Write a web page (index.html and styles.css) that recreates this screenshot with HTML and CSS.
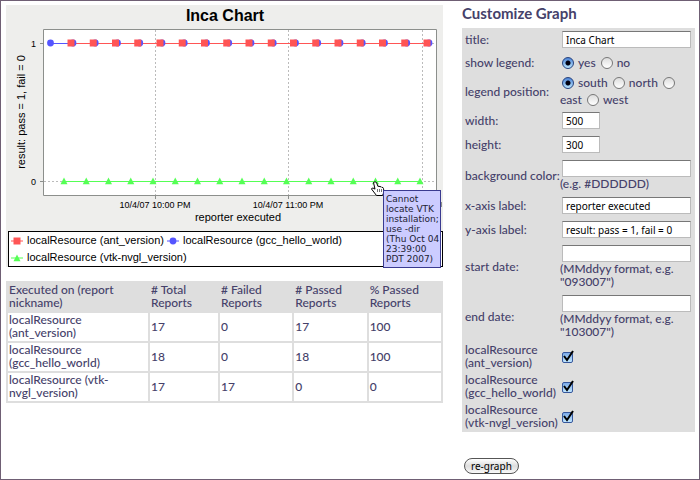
FILE: index.html
```html
<!DOCTYPE html>
<html lang="en">
<head>
<meta charset="utf-8">
<title>Inca Chart</title>
<link rel="stylesheet" href="styles.css">
</head>
<body>
<main class="page">
  <section class="report">
    <div class="chart">
      <svg class="plot" viewBox="6 5 437 225" role="img" aria-label="Inca Chart">
        <defs>
          <path id="red" d="M-3.500-3.500h7v7h-7z" fill="#ff5555"/>
          <circle id="blue" r="3.4" fill="#5555ff"/>
          <path id="green" d="M0-3.500 3.500 3.200h-7z" fill="#55ff55"/>
        </defs>
        <text class="heading" x="225" y="21" text-anchor="middle">Inca Chart</text>
        <path d="M43.500 29.500H436.500V195.500H43.500z" fill="#fff" stroke="#8c8f8c"/>
        <g class="grid"><path d="M155.500 30V195M288.500 30V195M422.500 30V195M428 43.500H436M44 181.500H64M420 181.500H436"/></g>
        <path d="M40 43.500h4M40 181.500h4M155.500 195v4M288.500 195v4M422.500 195v4M441.500 202v5" stroke="#8c8f8c"/>
        <g class="lines">
          <rect x="50" y="43" width="21" height="1" fill="#5555ff"/>
          <rect x="71" y="43" width="357" height="1" fill="#ff5555"/>
          <rect x="64" y="181" width="356" height="1" fill="#55ff55"/>
        </g>
        <g id="points"></g>
        <g class="ticks">
          <text x="36" y="47" text-anchor="end">1</text>
          <text x="36" y="185" text-anchor="end">0</text>
          <text x="155" y="208" text-anchor="middle">10/4/07 10:00 PM</text>
          <text x="288" y="208" text-anchor="middle">10/4/07 11:00 PM</text>
        </g>
        <text class="axis" x="238" y="221" text-anchor="middle">reporter executed</text>
        <text class="axis" transform="translate(25 112) rotate(-90)" text-anchor="middle">result: pass = 1, fail = 0</text>
        <path d="M373.500 182.500q1.500-1.500 3 0l1.500 4q1-1 2 .3q1.200-.7 1.800.6q1.500-.3 1.700 1.100l.5 3.500-1.500 3.500h-6l-5-6.500q.3-1.700 2.500-.6l1 .8z" fill="#fff" stroke="#000"/>
        <path d="M377.500 189v3M379.500 189v3M381.500 189v3" stroke="#333" stroke-width=".7"/>
      </svg>
      <ul class="legend">
        <li><svg class="key" viewBox="-6 -5 12 10"><path d="M-6 0H6" stroke="#ff5555"/><use href="#red"/></svg>localResource (ant_version)</li>
        <li><svg class="key" viewBox="-6 -5 12 10"><path d="M-6 0H6" stroke="#5555ff"/><use href="#blue"/></svg>localResource (gcc_hello_world)</li>
        <li><svg class="key" viewBox="-6 -5 12 10"><path d="M-6 0H6" stroke="#55ff55"/><use href="#green"/></svg>localResource (vtk-nvgl_version)</li>
      </ul>
      <div class="tooltip" role="tooltip">Cannot locate VTK installation; use -dir (Thu Oct 04 23:39:00 PDT 2007)</div>
    </div>
    <table class="summary">
      <thead>
        <tr><th class="name">Executed on (report nickname)</th><th class="total"># Total Reports</th><th class="count"># Failed Reports</th><th class="count"># Passed Reports</th><th class="count">% Passed Reports</th></tr>
      </thead>
      <tbody>
        <tr><td>localResource (ant_version)</td><td>17</td><td>0</td><td>17</td><td>100</td></tr>
        <tr><td>localResource (gcc_hello_world)</td><td>18</td><td>0</td><td>18</td><td>100</td></tr>
        <tr><td>localResource (vtk-nvgl_version)</td><td>17</td><td>17</td><td>0</td><td>0</td></tr>
      </tbody>
    </table>
  </section>

  <form class="customize">
    <h2>Customize Graph</h2>
    <div class="fields">
      <div class="row"><label for="title">title:</label><div><input class="text" id="title" type="text" value="Inca Chart"></div></div>
      <div class="row choice"><span id="show">show legend:</span><div role="radiogroup" aria-labelledby="show"><input type="radio" name="show" id="yes" checked><label for="yes">yes</label> <input type="radio" name="show" id="no"><label for="no">no</label></div></div>
      <div class="row choice"><span id="pos">legend position:</span><div role="radiogroup" aria-labelledby="pos"><input type="radio" name="pos" id="south" checked><label for="south">south</label> <input type="radio" name="pos" id="north"><label for="north">north</label> <input type="radio" name="pos" id="east"> <label for="east">east</label> <input type="radio" name="pos" id="west"><label for="west">west</label></div></div>
      <div class="row"><label for="width">width:</label><div><input class="text short" id="width" type="text" value="500"></div></div>
      <div class="row"><label for="height">height:</label><div><input class="text short" id="height" type="text" value="300"></div></div>
      <div class="row"><label for="bg">background color:</label><div><input class="text" id="bg" type="text">(e.g. #DDDDDD)</div></div>
      <div class="row"><label for="xl">x-axis label:</label><div><input class="text" id="xl" type="text" value="reporter executed"></div></div>
      <div class="row"><label for="yl">y-axis label:</label><div><input class="text" id="yl" type="text" value="result: pass = 1, fail = 0"></div></div>
      <div class="row"><label for="start">start date:</label><div><input class="text" id="start" type="text">(MMddyy format, e.g. "093007")</div></div>
      <div class="row"><label for="end">end date:</label><div><input class="text" id="end" type="text">(MMddyy format, e.g. "103007")</div></div>
      <div class="row series"><label for="ant">localResource (ant_version)</label><span class="tick"><input type="checkbox" id="ant" checked><svg viewBox="0 0 14 14"><path d="M3 6 6 10 12 1"/></svg></span></div>
      <div class="row series"><label for="gcc">localResource (gcc_hello_world)</label><span class="tick"><input type="checkbox" id="gcc" checked><svg viewBox="0 0 14 14"><path d="M3 6 6 10 12 1"/></svg></span></div>
      <div class="row series"><label for="vtk">localResource (vtk-nvgl_version)</label><span class="tick"><input type="checkbox" id="vtk" checked><svg viewBox="0 0 14 14"><path d="M3 6 6 10 12 1"/></svg></span></div>
    </div>
    <button type="button">re-graph</button>
  </form>
</main>
<script src="chart.js"></script>
</body>
</html>
```
FILE: chart.js
```js
// Plots one marker per report run.
const points = document.getElementById("points");
const step = 22.25;
function plot(shape, x, y) {
  const mark = document.createElementNS("http://www.w3.org/2000/svg", "use");
  mark.setAttribute("href", "#" + shape);
  mark.setAttribute("x", x);
  mark.setAttribute("y", y);
  points.appendChild(mark);
}
plot("blue", 50.5, 43);
for (let i = 0; i < 17; i++) {
  plot("blue", 73 + i * step, 43);
  plot("red", 71 + i * step, 43);
  plot("green", 64 + i * step, 181);
}
```
FILE: styles.css
```css
* { box-sizing: border-box; }
body {
  margin: 0;
  color: #45416a;
  background: #fff;
  font: 12px/13px "Trebuchet MS", Lato, sans-serif;
  font-weight: 500;
}
.page {
  display: grid;
  grid-template-columns: 437fr 233fr;
  column-gap: 19px;
  min-height: 100vh;
  padding: 4px 4px 4px 5px;
  border: 1px solid #6f5f74;
}
.chart { position: relative; background: #eeeeec; font-family: "Liberation Sans", sans-serif; color: #000; }
.plot { display: block; width: 100%; }
.heading { font-size: 16px; font-weight: bold; }
.grid path { fill: none; stroke: #bbb; stroke-dasharray: 2 2; }
.ticks { font-size: 9px; }
.axis { font-size: 11px; }
.plot text { fill: #000; }
.legend {
  display: flex;
  flex-wrap: wrap;
  gap: 0 3px;
  margin: 1px 0 0 2px;
  padding: 0 2px;
  list-style: none;
  background: #fff;
  border: 1px solid #000;
  font-size: 11px;
  line-height: 17px;
}
.legend li { display: flex; align-items: center; gap: 4px; }
.key { width: 12px; height: 10px; }
.tooltip {
  position: absolute;
  right: 2px;
  bottom: -1px;
  width: 58px;
  padding: 3px 0 3px 2px;
  background: #ccccff;
  border: 1px solid #3a3a90;
  color: #223;
  font: 9px/10px "DejaVu Sans", sans-serif;
}
.summary { width: 100%; margin-top: 14px; border-collapse: collapse; table-layout: fixed; }
.summary th, .summary td { height: 30px; padding: 0 1px 2px; border: 2px solid #dedede; text-align: left; font-weight: 500; }
.summary th { background: #dedede; }
.name { width: 142px; }
.total { width: 70px; }
.customize h2 { margin: 0; font-size: 15px; line-height: 17px; font-weight: bold; }
.fields { margin-top: 6px; padding-left: 3px; background: #dedede; }
.row { display: grid; grid-template-columns: 95px 1fr; align-items: center; padding: 3px 4px 4px 0; }
.choice { padding: 2px 0 1px; line-height: 17px; }
.series { padding: 1px 0 3px; }
.text {
  display: block;
  width: calc(100% - 2px);
  height: 17px;
  margin: 0 0 0 2px;
  padding: 0 3px;
  border: 1px solid #bbb;
  border-top-color: #777;
  background: #fff;
  color: #000;
  font: 10px "Noto Sans", sans-serif;
}
.short { width: 38px; }
input[type="radio"] {
  appearance: none;
  width: 12px;
  height: 12px;
  margin: 0 4px 0 2px;
  border: 1px solid #777;
  border-radius: 50%;
  background: linear-gradient(#ddd, #fff);
  vertical-align: -2px;
}
input[type="radio"]:checked {
  border-color: #26427e;
  background: radial-gradient(circle, #001 0 2px, transparent 3px), linear-gradient(#4b82d5, #b9e5ff);
}
.tick { position: relative; display: block; width: 14px; height: 13px; margin-left: 1px; }
.tick input {
  appearance: none;
  display: block;
  width: 11px;
  height: 11px;
  margin: 2px 1px 0;
  border: 1px solid #36579c;
  border-radius: 2px;
  background: linear-gradient(#7caae8, #c0e7ff);
}
.tick svg { position: absolute; inset: 0; pointer-events: none; }
.tick path { fill: none; stroke: #000; stroke-width: 2; }
.tick input:not(:checked) + svg { display: none; }
button {
  display: block;
  height: 16px;
  margin: 26px 0 0 2px;
  padding: 0 6px;
  border: 1px solid #555;
  border-radius: 8px;
  background: linear-gradient(#fff, #ddd 50%, #f8f8f8);
  color: #000;
  font: 10px/12px "Noto Sans", sans-serif;
}
```
